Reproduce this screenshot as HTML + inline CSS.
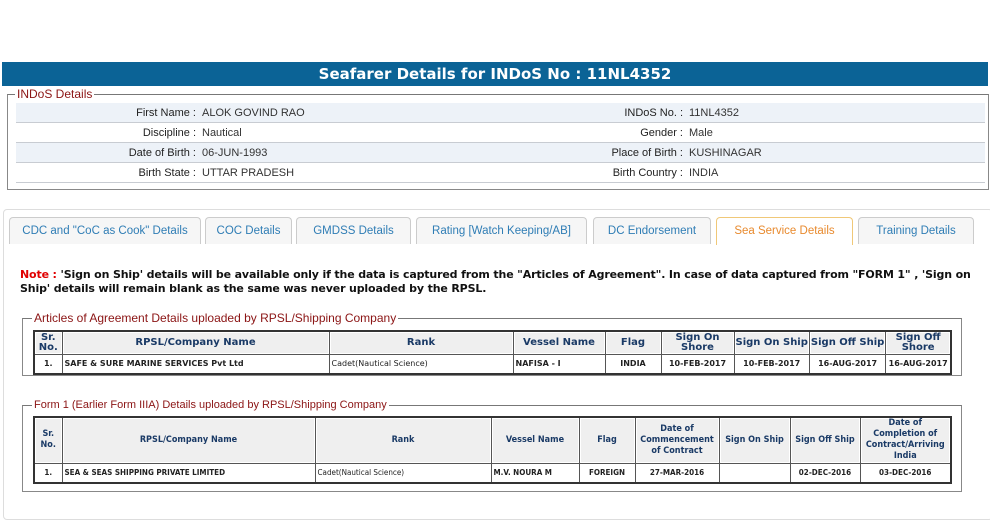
<!DOCTYPE html>
<html><head><style>
*{box-sizing:border-box;margin:0;padding:0}
body{width:990px;height:523px;background:#fff;position:relative;overflow:hidden;font-family:"Liberation Sans",Arial,sans-serif}
.a{position:absolute}
.hdr{left:2px;top:62px;width:986px;height:24px;background:#0b6396;color:#fff;font:bold 15px "DejaVu Sans",Verdana,sans-serif;text-align:center;line-height:24px}
.fs{position:absolute;border:1px solid #888;border-top-color:#777}
.lg{position:absolute;background:#fff;padding:0 2px;color:#8b1414;font-size:12px;line-height:12px}
.row{position:absolute;left:16px;width:969px;height:20px;border-bottom:1px solid #c8ccd2;font-size:11px;color:#333;line-height:20px}
.row.s{background:#edf2f8}
.row span{position:absolute}
.l{text-align:right;width:195px;color:#222}
.tab{position:absolute;top:217px;height:27px;background:#f6f6f6;border:1px solid #ccc;border-bottom:none;border-radius:4px 4px 0 0;color:#2f7db5;font-size:11.5px;text-align:center;line-height:27px}
.tab.act{background:#fff;border-color:#f0c878;color:#e88a2e;height:28px}
.note{left:20px;top:268px;width:965px;font:bold 11px "DejaVu Sans",Verdana,sans-serif;letter-spacing:-0.15px;line-height:14px;color:#111}
table{position:absolute;border-collapse:collapse;border:2px solid #333}
td,th{border:1px solid #555;box-shadow:inset 0 0 0 1px #fff;padding:0 2px}
th{background:#efefef;color:#1a3a66;font:bold 10px "DejaVu Sans",Verdana,sans-serif;line-height:10px}
th.n{white-space:nowrap;padding:0 1px}
td{font:bold 8px "DejaVu Sans",Verdana,sans-serif;color:#222;height:20px}
.t2 th{font:bold 9px "DejaVu Sans Condensed","Liberation Sans Narrow",sans-serif;line-height:11px;padding:0 1px}
.t2 td{font:bold 8px "DejaVu Sans Condensed","Liberation Sans Narrow",sans-serif}
.c{text-align:center}
</style></head><body>
<div class="a hdr">Seafarer Details for INDoS No : 11NL4352</div>

<div class="fs" style="left:7px;top:94px;width:982px;height:96px"></div>
<div class="lg" style="left:15px;top:88px">INDoS Details</div>
<div class="row s" style="top:103px"><span class="l" style="left:-15px">First Name :</span><span style="left:186px">ALOK GOVIND RAO</span><span class="l" style="left:472px">INDoS No. :</span><span style="left:673px">11NL4352</span></div>
<div class="row" style="top:123px"><span class="l" style="left:-15px">Discipline :</span><span style="left:186px">Nautical</span><span class="l" style="left:472px">Gender :</span><span style="left:673px">Male</span></div>
<div class="row s" style="top:143px"><span class="l" style="left:-15px">Date of Birth :</span><span style="left:186px">06-JUN-1993</span><span class="l" style="left:472px">Place of Birth :</span><span style="left:673px">KUSHINAGAR</span></div>
<div class="row" style="top:163px"><span class="l" style="left:-15px">Birth State :</span><span style="left:186px">UTTAR PRADESH</span><span class="l" style="left:472px">Birth Country :</span><span style="left:673px">INDIA</span></div>

<div class="a" style="left:3px;top:209px;width:990px;height:311px;border:1px solid #ddd;border-radius:4px"></div>
<div class="tab" style="left:9px;width:192px">CDC and "CoC as Cook" Details</div>
<div class="tab" style="left:205px;width:87px">COC Details</div>
<div class="tab" style="left:296px;width:115px">GMDSS Details</div>
<div class="tab" style="left:416px;width:171px">Rating [Watch Keeping/AB]</div>
<div class="tab" style="left:593px;width:118px">DC Endorsement</div>
<div class="tab act" style="left:716px;width:137px">Sea Service Details</div>
<div class="tab" style="left:858px;width:116px">Training Details</div>

<div class="a note"><span style="color:#e00000">Note :</span> 'Sign on Ship' details will be available only if the data is captured from the "Articles of Agreement". In case of data captured from "FORM 1" , 'Sign on Ship' details will remain blank as the same was never uploaded by the RPSL.</div>

<div class="fs" style="left:22px;top:318px;width:940px;height:58px"></div>
<div class="lg" style="left:32px;top:312px">Articles of Agreement Details uploaded by RPSL/Shipping Company</div>
<table style="left:33px;top:330px;width:919px">
<tr style="height:23px"><th style="width:28px">Sr.<br>No.</th><th style="width:267px">RPSL/Company Name</th><th style="width:184px">Rank</th><th style="width:92px">Vessel Name</th><th style="width:56px">Flag</th><th style="width:73px">Sign On<br>Shore</th><th class="n" style="width:73px">Sign On Ship</th><th class="n" style="width:73px">Sign Off Ship</th><th>Sign Off<br>Shore</th></tr>
<tr><td class="c">1.</td><td>SAFE &amp; SURE MARINE SERVICES Pvt Ltd</td><td style="font-weight:normal">Cadet(Nautical Science)</td><td>NAFISA - I</td><td class="c">INDIA</td><td class="c">10-FEB-2017</td><td class="c">10-FEB-2017</td><td class="c">16-AUG-2017</td><td class="c">16-AUG-2017</td></tr>
</table>

<div class="fs" style="left:22px;top:405px;width:940px;height:87px"></div>
<div class="lg" style="left:32px;top:399px;font-size:11px">Form 1 (Earlier Form IIIA) Details uploaded by RPSL/Shipping Company</div>
<table class="t2" style="left:33px;top:416px;width:919px">
<tr style="height:46px"><th style="width:28px">Sr.<br>No.</th><th style="width:253px">RPSL/Company Name</th><th style="width:176px">Rank</th><th style="width:88px">Vessel Name</th><th style="width:56px">Flag</th><th style="width:84px">Date of<br>Commencement<br>of Contract</th><th class="n" style="width:71px">Sign On Ship</th><th class="n" style="width:70px">Sign Off Ship</th><th>Date of<br>Completion of<br>Contract/Arriving<br>India</th></tr>
<tr><td class="c">1.</td><td>SEA &amp; SEAS SHIPPING PRIVATE LIMITED</td><td style="font-weight:normal">Cadet(Nautical Science)</td><td>M.V. NOURA M</td><td class="c">FOREIGN</td><td class="c">27-MAR-2016</td><td></td><td class="c">02-DEC-2016</td><td class="c">03-DEC-2016</td></tr>
</table>
</body></html>
